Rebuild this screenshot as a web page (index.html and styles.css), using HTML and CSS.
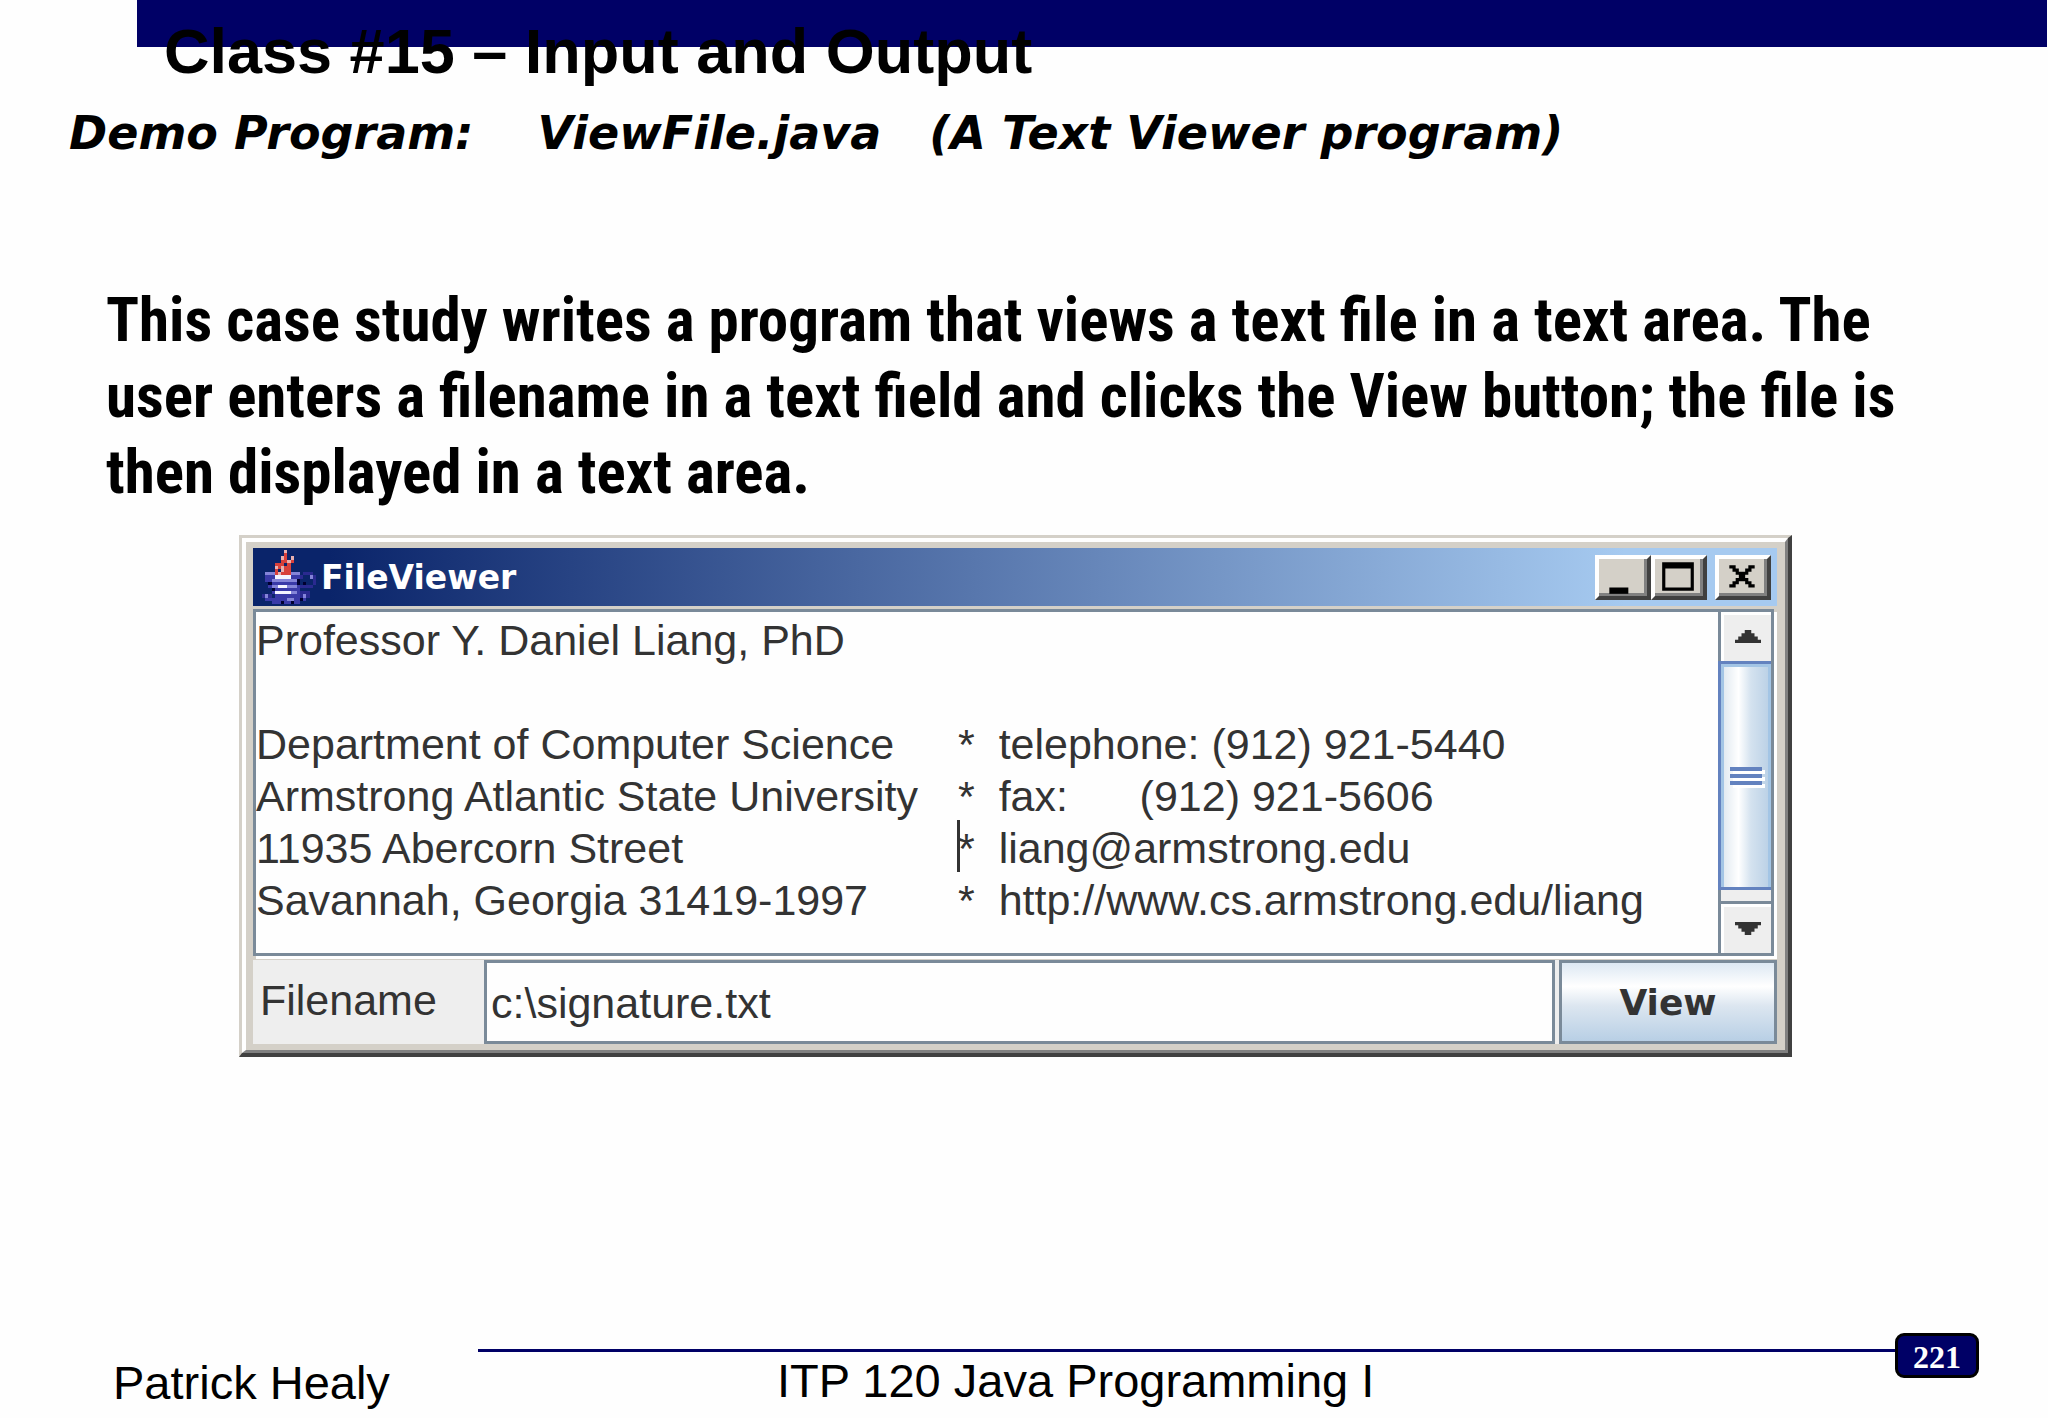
FILE: index.html
```
<!DOCTYPE html>
<html lang="en">
<head>
  <meta charset="UTF-8" />
  <meta name="viewport" content="width=device-width, initial-scale=1.0"/>
  <title>Class #15 – Input and Output</title>
  <link rel="stylesheet" href="styles.css">
</head>
<body>
  <header>
    <div class="bar"></div>
    <h1>Class #15 – Input and Output</h1>
    <h2>Demo Program:&nbsp;&nbsp;&nbsp; ViewFile.java&nbsp;&nbsp; (A Text Viewer program)</h2>
  </header>

  <main>
    <p class="intro">This case study writes a program that views a text file in a text area. The user enters a filename in a text field and clicks the View button; the file is then displayed in a text area.</p>

    <!-- FileViewer window -->
    <div class="window">
      <div class="window-inner">
        <div class="titlebar">
          <svg class="cup" viewBox="0 0 17 17" shape-rendering="crispEdges">
            <path fill="#d8403a" d="M7 1h1v2h-1zM6 3h2v1h-2zM9 2h1v2h-1zM4 4h5v4h-5z"/>
            <path fill="#0a246a" d="M7 4h1v1h-1zM5 6h1v1h-1z"/>
            <path fill="#e8b0b0" d="M7 0h1v1h-1zM6 2h1v1h-1zM9 2h1v1h-1zM8 3h1v1h-1zM4 5h1v1h-1zM6 5h1v2h-1zM5 7h1v1h-1z"/>
            <path fill="#3a3aa8" d="M1 8h11v2h-11zM2 10h10v2h-10zM3 12h9v2h-9zM4 14h8v1h-8zM1 15h13v1h-13zM3 16h9v1h-9z"/>
            <path fill="#2a2a90" d="M13 7h3v1h-3zM16 8h1v3h-1zM12 11h4v1h-4zM12 8h1v1h-1zM0 14h3v1h-3zM12 13h3v2h-3z"/>
            <path fill="#8484d8" d="M1 7h3v1h-3zM9 7h3v1h-3zM3 9h8v1h-8zM3 11h8v1h-8zM4 13h7v1h-7zM1 14h1v1h-1zM13 14h1v1h-1zM15 8h1v1h-1zM8 15h2v1h-2z"/>
            <path fill="#f4f4ff" d="M4 8h5v1h-5zM5 11h3v1h-3zM4 13h5v1h-5z"/>
            <path fill="#000030" d="M2 10h1v1h-1zM11 9h1v2h-1zM3 12h1v1h-1zM6 16h1v1h-1zM9 16h1v1h-1zM12 15h1v1h-1zM13 10h1v1h-1z"/>
          </svg>
          <span class="caption">FileViewer</span>
          <div class="controls">
            <button aria-label="Minimize"><svg viewBox="0 0 14 12"><path d="M3 9h6v2h-6z"/></svg></button>
            <button aria-label="Maximize"><svg viewBox="0 0 14 12"><path fill-rule="evenodd" d="M2 1h10v9h-10zM3 3v6h8v-6z"/></svg></button>
            <button class="close" aria-label="Close"><svg viewBox="0 0 14 12"><path d="M3 2h2v1h1v1h2v-1h1v-1h2v1h-1v1h-1v1h-1v1h1v1h1v1h1v1h-2v-1h-1v-1h-2v1h-1v1h-2v-1h1v-1h1v-1h1v-1h-1v-1h-1v-1h-1z"/></svg></button>
          </div>
        </div>

        <div class="viewer">
          <textarea id="content" aria-label="File content" wrap="off" spellcheck="false" readonly>
Professor Y. Daniel Liang, PhD

Department of Computer Science	*  telephone: (912) 921-5440
Armstrong Atlantic State University	*  fax:      (912) 921-5606
11935 Abercorn Street	*  liang@armstrong.edu
Savannah, Georgia 31419-1997	*  http://www.cs.armstrong.edu/liang</textarea>
          <span class="caret"></span>
          <div class="scrollbar">
            <button aria-label="Scroll up"><svg viewBox="0 0 8 4"><path d="M3 0h2v1h1v1h1v1h1v1h-8v-1h1v-1h1v-1h1z"/></svg></button>
            <div class="thumb"><i></i><i></i><i></i></div>
            <button class="down" aria-label="Scroll down"><svg viewBox="0 0 8 4"><path d="M0 0h8v1h-1v1h-1v1h-1v1h-2v-1h-1v-1h-1v-1h-1z"/></svg></button>
          </div>
        </div>

        <div class="form">
          <label for="filename">Filename</label>
          <input type="text" id="filename" value="c:\signature.txt" spellcheck="false">
          <button class="view">View</button>
        </div>
      </div>
    </div>
  </main>

  <footer>
    <span class="author">Patrick Healy</span>
    <div class="right">
      <div class="rule"><hr><span class="page">221</span></div>
      <span class="course">ITP 120 Java Programming I</span>
    </div>
  </footer>
</body>
</html>
```
FILE: styles.css
```
* {
  box-sizing: border-box;
}
body {
  margin: 0;
  min-height: 100vh;
  display: flex;
  flex-direction: column;
  background: #fefefe;
  color: #000;
  font-family: "Liberation Sans", Arial, sans-serif;
}
.bar {
  height: 47px;
  margin: 0 1px 0 137px;
  background: #000066;
}
h1 {
  margin: -32px 0 0 164px;
  font-size: 63px;
  line-height: 72px;
}
h2 {
  margin: 16px 0 0 69px;
  font-family: "DejaVu Sans", "Arial Black", sans-serif;
  font-size: 46px;
  line-height: 60px;
  font-weight: 900;
  font-style: italic;
}
main {
  flex: 1;
}
.intro {
  margin: 119px 120px 0 106px;
  font-family: "Roboto Condensed", "Arial Narrow", Roboto, sans-serif;
  font-size: 61px;
  line-height: 76px;
  font-weight: bold;
}
.window {
  margin: 25px 256px 0 239px;
  border: 3px solid;
  border-color: #d4d0c8 #404040 #404040 #d4d0c8;
  border-right-width: 4px;
  border-bottom-width: 4px;
}
.window-inner {
  border: 4px solid;
  border-color: #fff #808080 #808080 #fff;
  border-right-width: 3px;
  border-bottom-width: 3px;
  padding: 6px 8px 6px 7px;
  background: #d4d0c8;
}
.titlebar {
  display: flex;
  align-items: center;
  height: 58px;
  padding: 0 6px 0 8px;
  background: linear-gradient(to right, #0a246a, #0a246a 5%, #a6caf0 90%);
  color: #fff;
}
.cup {
  width: 56px;
  height: 54px;
}
.caption {
  flex: 1;
  margin-left: 4px;
  font-family: "DejaVu Sans", sans-serif;
  font-size: 33px;
  font-weight: bold;
}
.controls {
  display: flex;
}
.controls button {
  width: 56px;
  height: 45px;
  padding: 0;
  border: 4px solid;
  border-color: #fff #404040 #404040 #fff;
  background: #d4d0c8;
  box-shadow: inset -3px -3px 0 #808080;
}
.controls .close {
  margin-left: 8px;
}
.controls svg {
  display: block;
  width: 46px;
  height: 38px;
}
.viewer {
  position: relative;
  display: flex;
  margin-top: 3px;
  height: 347px;
  border: 3px solid #7a8a99;
  box-shadow: 3px 3px 0 #fff;
  margin-right: 3px;
}
textarea {
  flex: 1;
  padding: 2px 0 0;
  border: 0;
  resize: none;
  overflow: hidden;
  background: #fefefe;
  color: #333;
  font-family: "Liberation Sans", Arial, sans-serif;
  font-size: 43px;
  line-height: 52px;
  tab-size: 702px;
}
.caret {
  position: absolute;
  left: 701px;
  top: 208px;
  width: 3px;
  height: 52px;
  background: #333;
}
.scrollbar {
  display: flex;
  flex-direction: column;
  width: 53px;
  border-left: 3px solid #7a8a99;
  background: #eee;
}
.scrollbar button {
  height: 49px;
  padding: 0;
  border: 3px solid #fff;
  border-width: 3px 0 0 3px;
  background: #eee;
}
.scrollbar svg {
  width: 28px;
  height: 13px;
  fill: #333;
}
.scrollbar .down {
  margin-top: 14px;
  box-shadow: 0 -3px 0 #7a8a99;
}
.thumb {
  flex: 1;
  display: flex;
  flex-direction: column;
  justify-content: center;
  align-items: center;
  gap: 3px;
  margin-left: -3px;
  border: 3px solid #6382bf;
  border-right: 0;
  box-shadow: inset 3px 3px 0 #a3c5e5, inset -3px 0 0 #a3c5e5;
  background: linear-gradient(to right, #dce6ee, #fff 35%, #d4e2ef 60%, #b8cfe5);
}
.thumb i {
  width: 32px;
  height: 4px;
  background: #6382bf;
  box-shadow: 3px 3px 0 #fff;
}
.form {
  display: flex;
  height: 84px;
  margin-top: 4px;
  background: #eee;
}
.form label,
.form input {
  color: #333;
  font-family: "Liberation Sans", Arial, sans-serif;
  font-size: 43px;
}
.form label {
  width: 231px;
  padding-left: 7px;
  line-height: 80px;
}
.form input {
  flex: 1;
  min-width: 0;
  padding: 2px 4px 0;
  border: 3px solid #7a8a99;
  background: #fefefe;
}
.view {
  width: 218px;
  margin-left: 4px;
  border: 3px solid #7a8a99;
  background: linear-gradient(#dde8f3, #fff 30%, #dce6f0 55%, #b8cfe5);
  color: #333;
  font-family: "DejaVu Sans", sans-serif;
  font-size: 36px;
  font-weight: bold;
}
footer {
  display: flex;
  padding: 0 69px 0 113px;
  height: 85px;
  font-size: 47px;
  line-height: 54px;
}
.author {
  width: 365px;
  padding-top: 23px;
}
.right {
  flex: 1;
}
.rule {
  display: flex;
  align-items: flex-start;
}
.rule hr {
  flex: 1;
  height: 3px;
  margin: 16px 0 0;
  border: 0;
  background: #000066;
}
.page {
  width: 84px;
  height: 45px;
  border: 3px solid #000;
  border-radius: 9px;
  background: #000066;
  color: #fff;
  font-family: "Liberation Serif", "Times New Roman", serif;
  font-size: 32px;
  line-height: 42px;
  font-weight: bold;
  text-align: center;
}
.course {
  display: block;
  margin: -24px 0 0 299px;
}
```
